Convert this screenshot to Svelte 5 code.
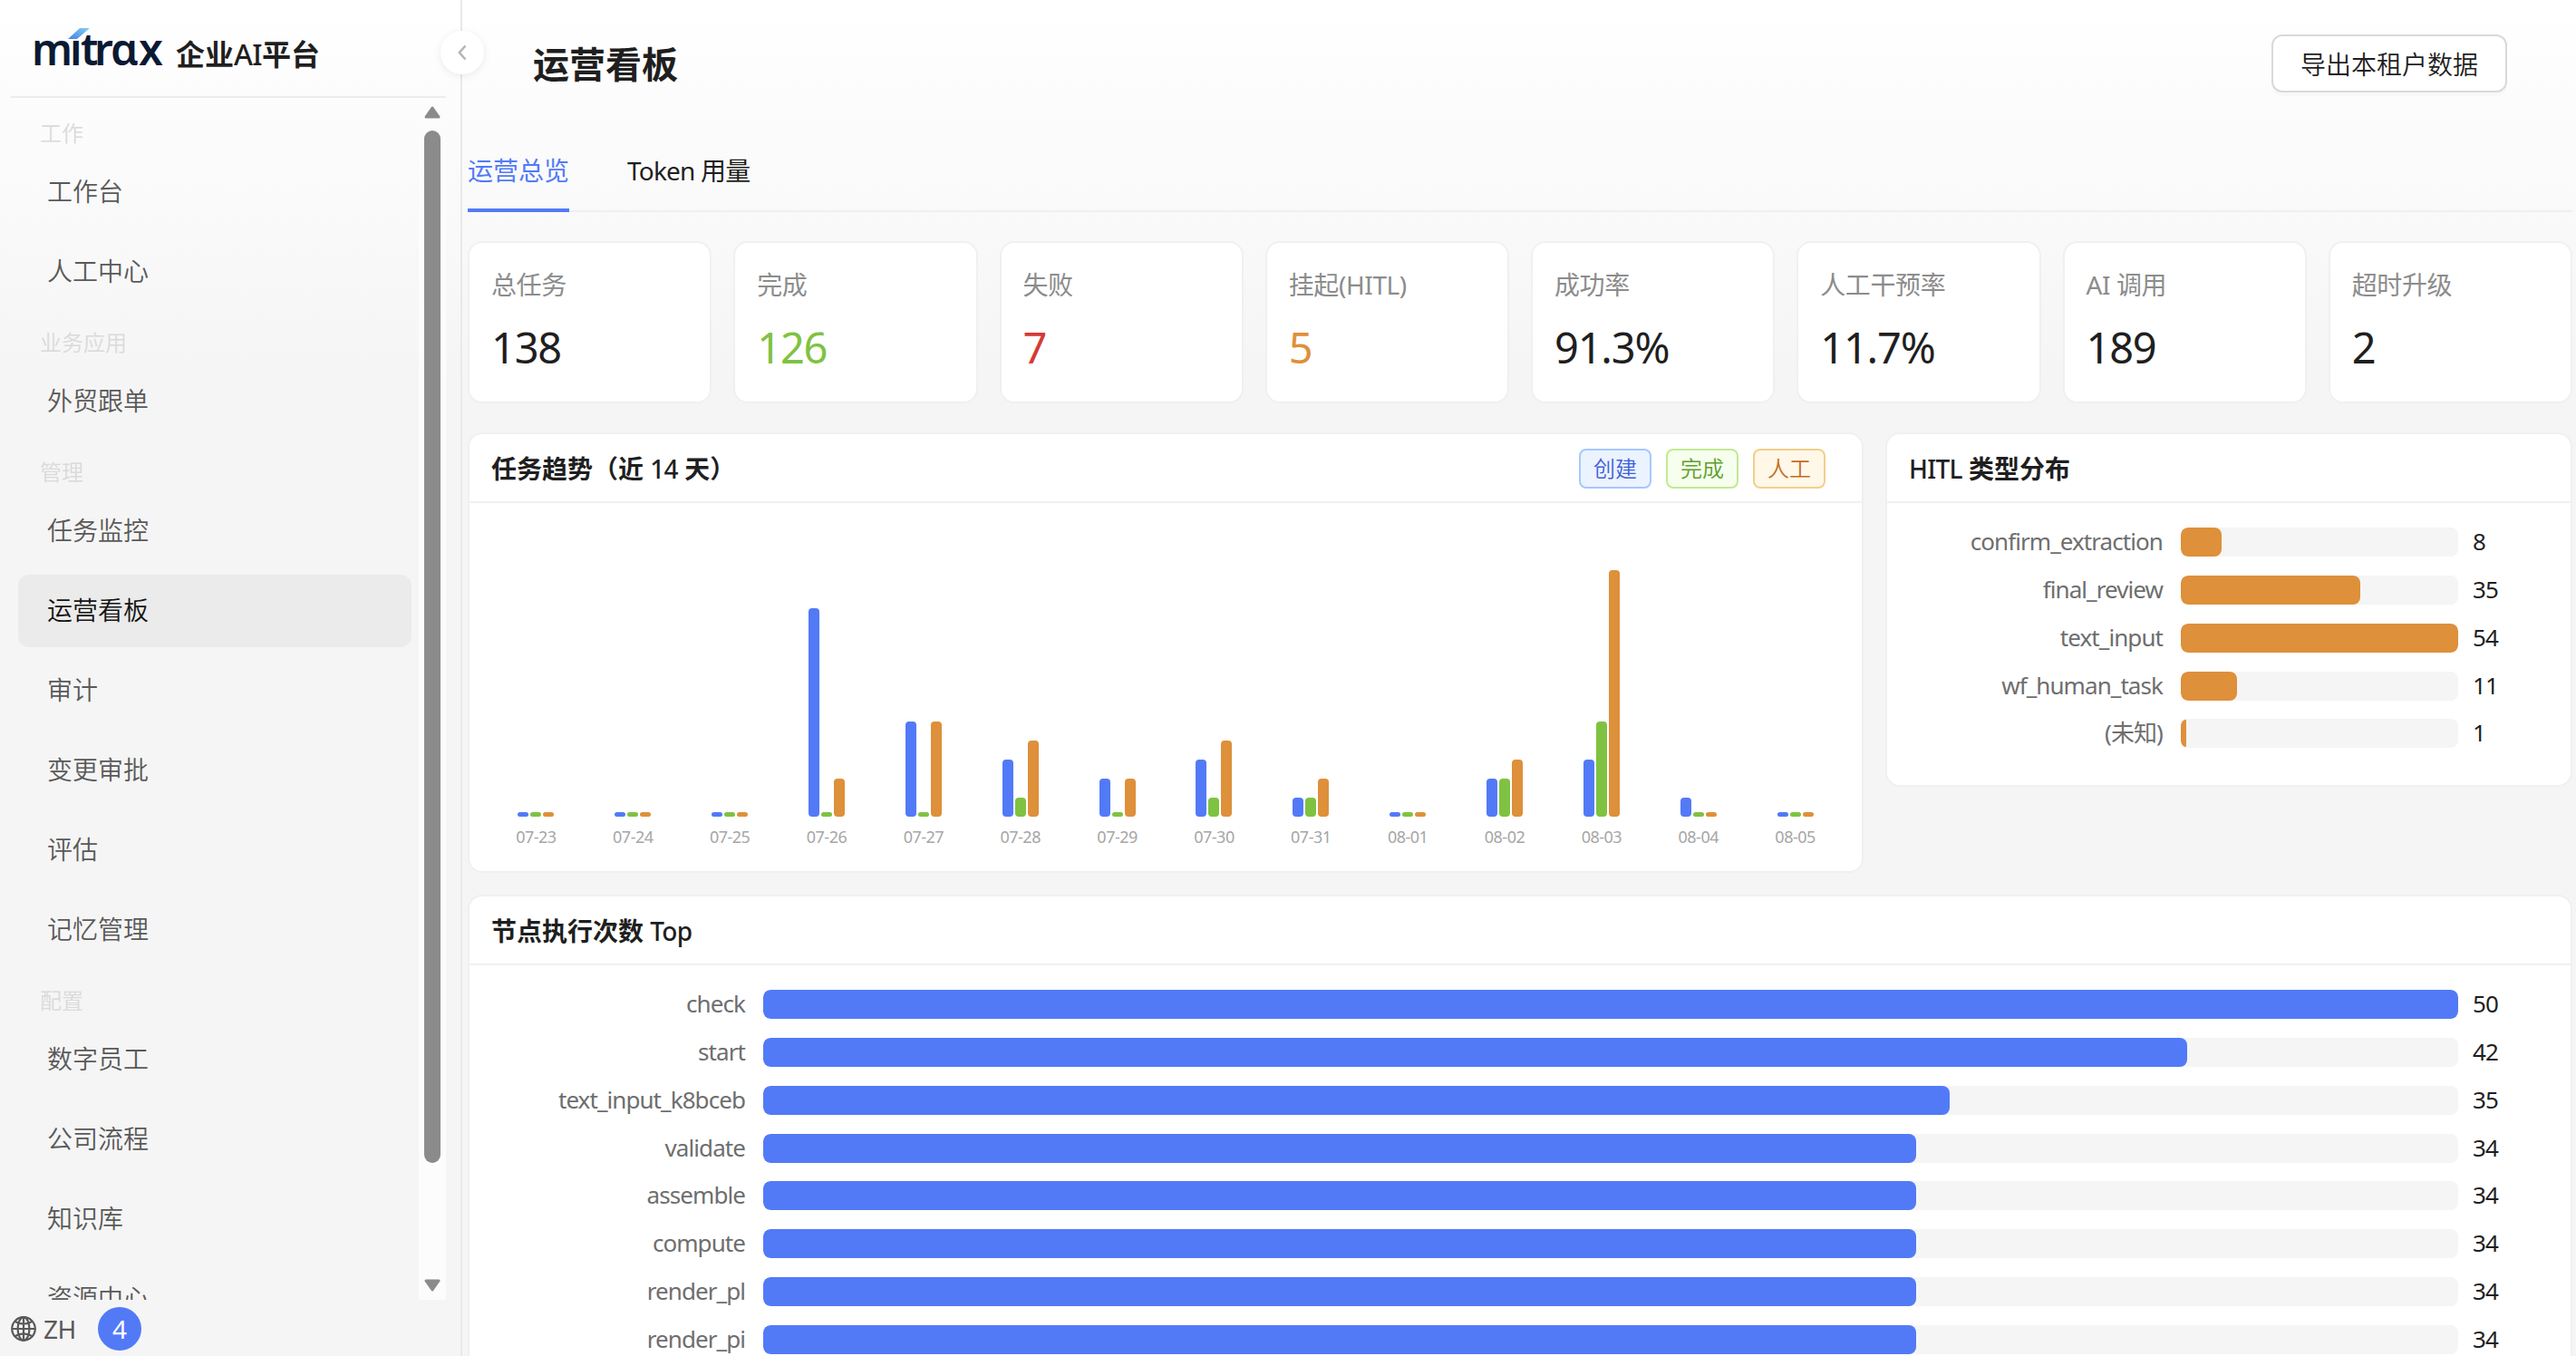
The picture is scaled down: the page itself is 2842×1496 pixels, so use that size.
<script>
  const menu = [
    { title: "工作", items: ["工作台", "人工中心"] },
    { title: "业务应用", items: ["外贸跟单"] },
    {
      title: "管理",
      items: ["任务监控", "运营看板", "审计", "变更审批", "评估", "记忆管理"],
    },
    { title: "配置", items: ["数字员工", "公司流程", "知识库", "资源中心"] },
  ];

  const tabs = ["运营总览", "Token 用量"];

  const stats = [
    { label: "总任务", value: "138" },
    { label: "完成", value: "126", tone: "green" },
    { label: "失败", value: "7", tone: "red" },
    { label: "挂起(HITL)", value: "5", tone: "orange" },
    { label: "成功率", value: "91.3%" },
    { label: "人工干预率", value: "11.7%" },
    { label: "AI 调用", value: "189" },
    { label: "超时升级", value: "2" },
  ];

  const trend = [
    { day: "07-23", values: [0, 0, 0] },
    { day: "07-24", values: [0, 0, 0] },
    { day: "07-25", values: [0, 0, 0] },
    { day: "07-26", values: [11, 0, 2] },
    { day: "07-27", values: [5, 0, 5] },
    { day: "07-28", values: [3, 1, 4] },
    { day: "07-29", values: [2, 0, 2] },
    { day: "07-30", values: [3, 1, 4] },
    { day: "07-31", values: [1, 1, 2] },
    { day: "08-01", values: [0, 0, 0] },
    { day: "08-02", values: [2, 2, 3] },
    { day: "08-03", values: [3, 5, 13] },
    { day: "08-04", values: [1, 0, 0] },
    { day: "08-05", values: [0, 0, 0] },
  ];
  const tones = ["blue", "green", "orange"];
  const trendMax = Math.max(...trend.flatMap((d) => d.values));

  const hitl = [
    { name: "confirm_extraction", count: 8 },
    { name: "final_review", count: 35 },
    { name: "text_input", count: 54 },
    { name: "wf_human_task", count: 11 },
    { name: "(未知)", count: 1 },
  ];

  const nodes = [
    { name: "check", count: 50 },
    { name: "start", count: 42 },
    { name: "text_input_k8bceb", count: 35 },
    { name: "validate", count: 34 },
    { name: "assemble", count: 34 },
    { name: "compute", count: 34 },
    { name: "render_pl", count: 34 },
    { name: "render_pi", count: 34 },
  ];

  let activeItem = "运营看板";
  let activeTab = "运营总览";

  function barHeight(value) {
    return Math.max(5, (value / trendMax) * 272);
  }
</script>

{#snippet bars(rows, tone)}
  {@const max = Math.max(...rows.map((r) => r.count))}
  <div class="rows">
    {#each rows as row}
      <div class="row">
        <span class="row-name">{row.name}</span>
        <div class="track">
          <div class="fill {tone}" style="width: {(row.count / max) * 100}%"></div>
        </div>
        <span class="row-count">{row.count}</span>
      </div>
    {/each}
  </div>
{/snippet}

<div class="app">
  <aside class="sidebar">
    <div class="brand">
      <svg class="logo" width="150" height="60" viewBox="0 0 150 60">
        <defs>
          <linearGradient id="accent" x1="0" y1="1" x2="1" y2="0">
            <stop offset="0" stop-color="#4a7fe6" />
            <stop offset="1" stop-color="#7fd3f2" />
          </linearGradient>
        </defs>
        <text y="50" class="logo-text">
          <tspan x="-4" textLength="45" lengthAdjust="spacingAndGlyphs">m</tspan><tspan x="38">ı</tspan><tspan x="50">t</tspan><tspan x="65">r</tspan><tspan x="83">ɑ</tspan><tspan x="114">x</tspan>
        </text>
        <path d="M36 21 L49 9 H60 L46 21 Z" fill="url(#accent)" />
      </svg>
      <span class="brand-name">企业<em>AI</em>平台</span>
    </div>

    <div class="menu-area">
      <nav class="menu">
        {#each menu as group}
          <div class="group-title">{group.title}</div>
          {#each group.items as item}
            <div class="menu-item" class:active={item === activeItem}>{item}</div>
          {/each}
        {/each}
      </nav>
      <div class="scrollbar">
        <svg width="18" height="14" viewBox="0 0 18 14">
          <path d="M9 2 L16 12 H2 Z" />
        </svg>
        <div class="thumb"></div>
        <svg width="18" height="14" viewBox="0 0 18 14">
          <path d="M9 12 L16 2 H2 Z" />
        </svg>
      </div>
    </div>

    <div class="sidebar-footer">
      <svg class="globe" width="28" height="28" viewBox="0 0 28 28">
        <circle cx="14" cy="14" r="12.8" />
        <ellipse cx="14" cy="14" rx="6.4" ry="12.8" />
        <path d="M14 1.2 V26.8 M1.2 14 H26.8 M4.2 5.8 Q14 11.6 23.8 5.8 M4.2 22.2 Q14 16.4 23.8 22.2" />
      </svg>
      <span class="lang">ZH</span>
      <span class="avatar">4</span>
    </div>

    <button class="collapse" aria-label="collapse">
      <svg width="10" height="18" viewBox="0 0 10 18">
        <path d="M8.5 1.5 L1.8 9 L8.5 16.5" />
      </svg>
    </button>
  </aside>

  <main class="main">
    <header class="page-header">
      <h1>运营看板</h1>
      <button class="export">导出本租户数据</button>
    </header>

    <div class="tabs">
      {#each tabs as tab}
        <div class="tab" class:active={tab === activeTab}>{tab}</div>
      {/each}
    </div>

    <section class="stats">
      {#each stats as stat}
        <div class="card stat">
          <div class="stat-label">{stat.label}</div>
          <div class="stat-value {stat.tone ?? ''}">{stat.value}</div>
        </div>
      {/each}
    </section>

    <section class="charts">
      <div class="card">
        <div class="card-head">
          <span>任务趋势（近 <em>14</em> 天）</span>
          <div class="legend">
            <span class="tag blue">创建</span>
            <span class="tag green">完成</span>
            <span class="tag orange">人工</span>
          </div>
        </div>
        <div class="trend">
          {#each trend as { day, values }}
            <div class="day">
              <div class="day-bars">
                {#each values as value, i}
                  <div class="day-bar {tones[i]}" style="height: {barHeight(value)}px"></div>
                {/each}
              </div>
              <span class="day-label">{day}</span>
            </div>
          {/each}
        </div>
      </div>

      <div class="card">
        <div class="card-head"><span><em>HITL</em> 类型分布</span></div>
        {@render bars(hitl, "orange")}
      </div>
    </section>

    <section class="card">
      <div class="card-head"><span>节点执行次数 <em>Top</em></span></div>
      {@render bars(nodes, "blue")}
    </section>
  </main>
</div>

<style>
  :global(body) {
    margin: 0;
    overflow: hidden;
  }

  .app {
    display: flex;
    width: 100%;
    height: 1496px;
    overflow: hidden;
    box-sizing: border-box;
    background: linear-gradient(180deg, #ffffff 0, #f5f5f5 420px);
    color: #1f1f1f;
    font-family: "Noto Sans", "Noto Sans CJK SC", sans-serif;
    font-size: 28px;
  }

  .app :global(*) {
    box-sizing: border-box;
  }

  em {
    font-style: normal;
    font-weight: 500;
    letter-spacing: -0.7px;
  }

  .sidebar {
    position: relative;
    display: flex;
    flex-direction: column;
    flex: 0 0 510px;
    border-right: 2px solid #e9e9e9;
  }

  .brand {
    display: flex;
    flex-shrink: 0;
    align-items: center;
    height: 108px;
    margin: 0 16px 0 12px;
    padding-left: 27px;
    border-bottom: 2px solid #ececec;
  }

  .logo {
    overflow: visible;
    margin-top: -2px;
  }

  .logo-text {
    font-family: "Noto Sans", sans-serif;
    font-size: 48px;
    font-weight: 600;
    fill: #0b1a33;
  }

  .brand-name {
    margin: 14px 0 0 5px;
    font-size: 32px;
    font-weight: 600;
    line-height: 40px;
    white-space: nowrap;
  }

  .menu-area {
    display: flex;
    flex-shrink: 0;
    height: 1326px;
    padding-right: 16px;
    overflow: hidden;
  }

  .menu {
    display: flex;
    flex: 1;
    flex-direction: column;
    padding: 5px 8px 0 20px;
  }

  .group-title {
    flex-shrink: 0;
    height: 55px;
    padding: 16px 0 0 24px;
    color: #dadada;
    font-size: 24px;
    font-weight: 350;
    line-height: 36px;
  }

  .menu-item {
    flex-shrink: 0;
    height: 80px;
    margin: 4px 0;
    padding-left: 32px;
    border-radius: 12px;
    color: #595959;
    font-weight: 350;
    line-height: 79px;
  }

  .menu-item.active {
    background: #ebebeb;
    color: #141414;
  }

  .scrollbar {
    display: flex;
    flex-direction: column;
    align-items: center;
    width: 30px;
    padding: 9px 0;
    background: #fcfcfc;
  }

  .scrollbar path {
    fill: #8b8b8b;
    stroke: #8b8b8b;
    stroke-width: 3;
    stroke-linejoin: round;
  }

  .thumb {
    width: 18px;
    height: 1139px;
    margin: 13px 0 auto;
    border-radius: 9px;
    background: #8b8b8b;
  }

  .sidebar-footer {
    display: flex;
    flex-shrink: 0;
    align-items: center;
    height: 62px;
    padding: 2px 0 0 12px;
    color: #595959;
  }

  .globe {
    fill: none;
    stroke: #595959;
    stroke-width: 2.2;
  }

  .lang {
    width: 60px;
    margin: 0 0 0 8px;
    line-height: 40px;
    letter-spacing: -0.5px;
  }

  .avatar {
    width: 48px;
    border-radius: 50%;
    background: #527af7;
    color: #fff;
    line-height: 48px;
    text-align: center;
  }

  .collapse {
    position: absolute;
    top: 34px;
    right: -26px;
    display: flex;
    align-items: center;
    justify-content: center;
    width: 48px;
    height: 48px;
    padding: 0;
    border: none;
    border-radius: 50%;
    background: #fff;
    box-shadow: 0 2px 10px rgba(0, 0, 0, 0.08);
  }

  .collapse path {
    fill: none;
    stroke: #b4b4b4;
    stroke-width: 2.4;
  }

  .main {
    flex: 1;
    min-width: 0;
    padding: 0 4px 0 6px;
  }

  .page-header {
    display: flex;
    align-items: center;
    justify-content: space-between;
    height: 140px;
    padding: 0 72px;
  }

  h1 {
    margin: 0;
    padding-top: 2px;
    font-size: 40px;
    font-weight: 700;
    line-height: 60px;
  }

  .export {
    height: 64px;
    padding: 0 30px;
    border: 2px solid #d9d9d9;
    border-radius: 12px;
    background: #fff;
    box-shadow: 0 4px 0 rgba(0, 0, 0, 0.02);
    color: #1f1f1f;
    font: inherit;
    font-weight: 350;
  }

  .tabs {
    display: flex;
    gap: 64px;
    height: 94px;
    border-bottom: 2px solid #f0f0f0;
  }

  .tab {
    height: 94px;
    padding-top: 26px;
    line-height: 44px;
  }

  .tab:not(.active) {
    letter-spacing: -0.8px;
  }

  .tab.active {
    border-bottom: 4px solid #527af7;
    color: #527af7;
  }

  .card {
    border: 2px solid #f0f0f0;
    border-radius: 16px;
    background: #fff;
  }

  .stats {
    display: grid;
    grid-template-columns: repeat(8, 1fr);
    gap: 24px;
    margin-top: 32px;
  }

  .stat {
    height: 179px;
    padding: 24px;
  }

  .stat-label {
    color: #8c8c8c;
    line-height: 44px;
    letter-spacing: -0.4px;
    white-space: nowrap;
  }

  .stat-value {
    margin-top: 9px;
    font-size: 47px;
    line-height: 77px;
    letter-spacing: -1.2px;
  }

  .stat-value.green {
    color: #7fc241;
  }

  .stat-value.red {
    color: #d63a35;
  }

  .stat-value.orange {
    color: #de903a;
  }

  .charts {
    display: grid;
    grid-template-columns: 1540px 1fr;
    align-items: start;
    gap: 24px;
    margin: 32px 0 24px;
  }

  .card-head {
    display: flex;
    align-items: center;
    justify-content: space-between;
    height: 76px;
    padding: 0 24px;
    border-bottom: 2px solid #f0f0f0;
    font-weight: 600;
  }

  .legend {
    display: flex;
    gap: 16px;
    margin: 2px 16px 0 0;
  }

  .tag {
    height: 44px;
    padding: 0 14px;
    border: 2px solid;
    border-radius: 8px;
    font-size: 24px;
    font-weight: 350;
    line-height: 40px;
  }

  .tag.blue {
    border-color: #a6c8ff;
    background: #ebf3ff;
    color: #3f5fd9;
  }

  .tag.green {
    border-color: #c1ea92;
    background: #f6ffed;
    color: #5c9e2b;
  }

  .tag.orange {
    border-color: #f2cf8a;
    background: #fff7e8;
    color: #c46c22;
  }

  .trend {
    display: flex;
    gap: 8px;
    height: 406px;
    padding: 24px;
  }

  .day {
    display: flex;
    flex: 1;
    flex-direction: column;
    align-items: center;
  }

  .day-bars {
    display: flex;
    align-items: flex-end;
    gap: 2px;
    height: 322px;
  }

  .day-bar {
    width: 12px;
    border-radius: 4px;
  }

  .day-label {
    margin-top: 8px;
    color: #a6a6a6;
    font-size: 18px;
    line-height: 28px;
    letter-spacing: -0.5px;
  }

  .rows {
    padding: 22.6px 24px 24px;
  }

  .row {
    display: flex;
    height: 40.86px;
    margin-bottom: 12px;
    align-items: center;
    font-size: 26px;
    line-height: 39px;
  }

  .row-name {
    width: 280px;
    margin: -1px 20px 0 0;
    color: #6e6e6e;
    text-align: right;
    letter-spacing: -0.93px;
  }

  .track {
    flex: 1;
    height: 32px;
    border-radius: 8px;
    background: #f5f5f5;
    overflow: hidden;
  }

  .fill {
    height: 100%;
    border-radius: 8px;
  }

  .fill.blue,
  .day-bar.blue {
    background: #527af7;
  }

  .day-bar.green {
    background: #7fc241;
  }

  .fill.orange,
  .day-bar.orange {
    background: #de903a;
  }

  .row-count {
    width: 84px;
    margin: -1px 0 0 16px;
    letter-spacing: -0.9px;
  }
</style>
